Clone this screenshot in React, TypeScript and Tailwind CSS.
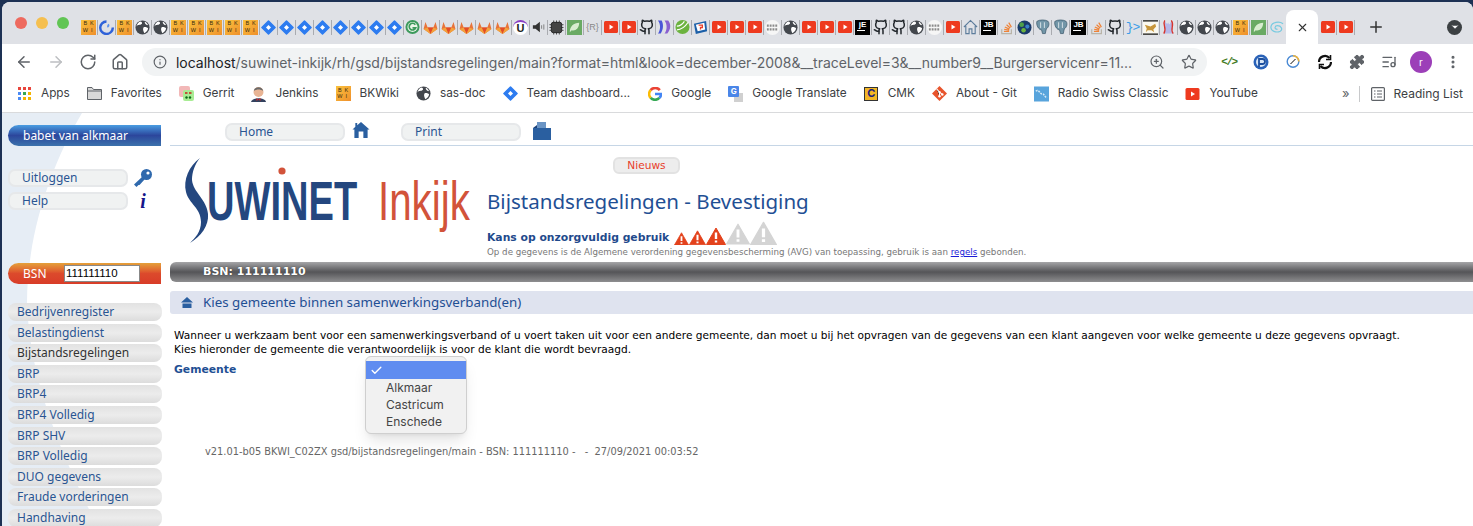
import { ArrowLeft, ArrowRight, RotateCw, Home, Info, ZoomIn, Star, Puzzle, ListMusic, MoreVertical, Plus, X, ChevronDown, Check } from "lucide-react";

const Bk = ({ size = 15 }: { size?: number }) => (
  <span
    className="grid grid-cols-2 place-items-center bg-gradient-to-br from-[#f9c23c] to-[#ef8f2c] text-[#3a2a10] font-normal leading-none text-[5.5px] font-['Liberation_Sans',sans-serif] shrink-0 px-[1px] py-[1px]"
    style={{ width: size, height: size }}
  >
    <span>B</span>
    <span>K</span>
    <span>W</span>
    <span>I</span>
  </span>
);

const Globe = () => (
  <svg width="15" height="15" viewBox="0 0 16 16">
    <circle cx="8" cy="8" r="7.5" fill="#43474d" />
    <path d="M6 1.5 C9 3 7 5 5 5 C3 5 2 6 1.5 7 C2 4 4 2 6 1.5 Z M9 8 C11 7 13 8 14 9 C13.5 11 12 13 10 14 C9 12 8 10 9 8 Z M10.5 1.8 C12 2.5 13.5 4 14 5.5 L12 5 C11 4 10 3 10.5 1.8 Z" fill="#fff" />
  </svg>
);

const Jira = () => (
  <svg width="15" height="15" viewBox="0 0 16 16">
    <path d="M8 1 L15 8 L8 15 L1 8 Z" fill="#2d7cf0" stroke="#2d7cf0" strokeWidth="1.6" strokeLinejoin="round" />
    <path d="M8 5.3 L10.7 8 L8 10.7 L5.3 8 Z" fill="#fff" />
  </svg>
);

const Gitlab = () => (
  <svg width="15" height="15" viewBox="0 0 16 16">
    <path d="M8 15 L0.6 9.5 L2.6 2 L5 8 H11 L13.4 2 L15.4 9.5 Z" fill="#e8743a" />
    <path d="M8 15 L5 8 H11 Z" fill="#e24c28" />
    <path d="M.6 9.5 L5 8 L8 15 Z M15.4 9.5 L11 8 L8 15 Z" fill="#f3a23c" />
  </svg>
);

const Yt = ({ w = 14 }: { w?: number }) => (
  <svg width={w} height="12" viewBox="0 0 14 12">
    <rect width="14" height="12" rx="1.5" fill="#ee3a1f" />
    <path d="M5.5 3.5 L9.5 6 L5.5 8.5 Z" fill="#fff" />
  </svg>
);

const Github = () => (
  <svg width="16" height="16" viewBox="0 0 24 24" fill="none" stroke="#24292e" strokeWidth="2.3" strokeLinecap="round" strokeLinejoin="round">
    <path d="M15 22v-4a4.8 4.8 0 0 0-1-3.5c3 0 6-2 6-5.5.08-1.25-.27-2.48-1-3.5.28-1.15.28-2.35 0-3.5 0 0-1 0-3 1.5-2.64-.5-5.36-.5-8 0C6 2 5 2 5 2c-.3 1.15-.3 2.35 0 3.5A5.4 5.4 0 0 0 4 9c0 3.5 3 5.5 6 5.5-.39.49-.68 1.05-.85 1.65S8.93 17.38 9 18v4" />
    <path d="M9 18c-4.51 2-5-2-7-2" />
  </svg>
);

const Leaf = () => (
  <svg width="15" height="15" viewBox="0 0 16 16">
    <rect width="16" height="16" fill="#6aaa64" />
    <path d="M3 13 C3 7 7 3 13 3 C13 9 9 12 5 11 Z" fill="#d8ecd0" />
  </svg>
);

const Dots = () => (
  <svg width="15" height="15" viewBox="0 0 16 16">
    <circle cx="8" cy="8" r="8" fill="#f6f6f6" />
    <path d="M2 6 H14 M2 10 H14" stroke="#8a8a8a" strokeWidth="2.4" strokeDasharray="2 1" />
  </svg>
);

const So = () => (
  <svg width="14" height="15" viewBox="0 0 16 16" fill="none">
    <path d="M2 10 V15 H13 V10" stroke="#b9b4a8" strokeWidth="1.4" />
    <path d="M4.5 12.5 H10.5 M4.7 10 L10.5 11 M5.5 7.5 L10.8 9.8 M7.5 4.8 L11.7 8.5 M10 2.5 L13 7.5" stroke="#ef8236" strokeWidth="1.4" />
  </svg>
);

const Jb = ({ label = "JB" }: { label?: string }) => (
  <span className="flex flex-col items-center justify-start w-[15px] h-[15px] bg-black text-white text-[8px] leading-[10px] font-bold font-['Liberation_Sans',sans-serif]">
    {label}
    <span className="block w-[8px] h-[1px] bg-white self-start ml-[2px]" />
  </span>
);

const Pg = () => (
  <svg width="15" height="16" viewBox="0 0 16 16">
    <path d="M2 2 C5 0 11 0 14 2 C16 5 14 9 12 10 L11 15 H8 L7 11 C4 11 1 6 2 2 Z" fill="#7296a8" stroke="#3e5b6e" strokeWidth=".8" />
    <path d="M6 3 V9 M10 3 V9" stroke="#dbe5ea" strokeWidth="1" />
  </svg>
);

// one favicon of the tab strip, by short code
const Fav = ({ t }: { t: string }) => {
  if (t === "bk") return <Bk />;
  if (t === "gl") return <Globe />;
  if (t === "ji") return <Jira />;
  if (t === "lab") return <Gitlab />;
  if (t === "yt") return <Yt />;
  if (t === "gh") return <Github />;
  if (t === "lf") return <Leaf />;
  if (t === "dt") return <Dots />;
  if (t === "so") return <So />;
  if (t === "jb") return <Jb />;
  if (t === "je") return <Jb label="jE" />;
  if (t === "pg") return <Pg />;
  if (t === "clock")
    return (
      <svg width="15" height="15" viewBox="0 0 16 16" fill="none">
        <path d="M8 1.5 A6.7 6.7 0 1 0 14.7 8" stroke="#2f62d8" strokeWidth="2.6" />
        <path d="M10 4 C12 5 11 8 9 8 C8 7 9 5 10 4 Z" fill="#5a90ee" />
      </svg>
    );
  if (t === "g")
    return (
      <svg width="15" height="16" viewBox="0 0 16 16">
        <circle cx="8" cy="8" r="7.5" fill="#3d9a5c" />
        <circle cx="8" cy="8" r="5.4" fill="#eaf5e8" />
        <path d="M11 5.5 A3.6 3.6 0 1 0 11.4 9 H8" stroke="#3d9a5c" strokeWidth="1.8" fill="none" />
      </svg>
    );
  if (t === "u")
    return (
      <span className="flex flex-col items-center justify-center w-[15px] h-[15px] rounded-full bg-white text-[11px] font-bold leading-[11px] text-[#222] font-['Liberation_Sans',sans-serif] border-t-2 border-[#8a3fc4]">
        U
      </span>
    );
  if (t === "sp")
    return (
      <svg width="14" height="14" viewBox="0 0 16 16">
        <path d="M1 6 H4 L9 2 V14 L4 10 H1 Z" fill="#333" />
        <path d="M11 6 V10 M13.5 5 V11" stroke="#777" strokeWidth="1" />
      </svg>
    );
  if (t === "chip")
    return (
      <svg width="15" height="15" viewBox="0 0 16 16" fill="none">
        <rect x="2.5" y="2.5" width="11" height="11" rx="2" fill="#444" stroke="#222" />
        <path d="M5 .5 V15.5 M8 .5 V15.5 M11 .5 V15.5 M.5 5 H15.5 M.5 8 H15.5 M.5 11 H15.5" stroke="#222" strokeWidth=".8" strokeDasharray="2 11" />
      </svg>
    );
  if (t === "r") return <span className="text-[9px] leading-none text-[#888] font-['Liberation_Sans',sans-serif]">{"{R}"}</span>;
  if (t === "pp")
    return (
      <svg width="15" height="16" viewBox="0 0 16 16" fill="none">
        <path d="M1 1 H5 C7 5 7 10 4 15 H1 C4 11 4 5 1 1 Z" fill="#4a55d8" />
        <path d="M8 1 H12 C15 5 15 10 11 15 H8 C11 11 11 5 8 1 Z" fill="#8a60d0" />
      </svg>
    );
  if (t === "spring")
    return (
      <svg width="15" height="16" viewBox="0 0 16 16">
        <circle cx="8" cy="8" r="7.5" fill="#6cb33f" />
        <path d="M2 11 C6 11 10 9 14 3 M2 7 C6 7 8 5 10 2" stroke="#fff" strokeWidth="1.2" fill="none" />
      </svg>
    );
  if (t === "tk")
    return (
      <svg width="15" height="15" viewBox="0 0 16 16">
        <path d="M1 4 L14 1 L15 12 L3 15 Z" fill="#1c5fa8" />
        <path d="M3 5 L12 3 L13 10 L5 12 Z" fill="#fff" />
        <path d="M6 5.5 H10 V8 H8 V10" stroke="#e8402a" strokeWidth="1.4" fill="none" />
      </svg>
    );
  if (t === "hm")
    return (
      <svg width="15" height="16" viewBox="0 0 16 16" fill="none" stroke="#5d7d9c" strokeWidth="1.2">
        <path d="M1 8 L8 1 L15 8 M3 7 V15 H6.5 V10 H9.5 V15 H13 V7" />
      </svg>
    );
  if (t === "ball")
    return (
      <svg width="15" height="15" viewBox="0 0 16 16">
        <circle cx="8" cy="8" r="7.5" fill="#1a3a6a" />
        <circle cx="5" cy="5" r="2.5" fill="#4fa04a" />
        <circle cx="11" cy="7" r="2.2" fill="#3a80c8" />
        <circle cx="7" cy="11" r="2.4" fill="#6cb33f" />
      </svg>
    );
  if (t === "br") return <span className="text-[13px] leading-none text-[#3b9ce8] font-['Liberation_Mono',monospace] tracking-[-1px]">{"}>"}</span>;
  if (t === "cat")
    return (
      <svg width="15" height="15" viewBox="0 0 16 16">
        <rect width="16" height="16" fill="#fbf9ef" />
        <path d="M0 1 H16 M0 15 H16" stroke="#111" strokeWidth="1.4" />
        <path d="M2 5 L8 7 L13 4 L14 7 L11 10 L12 13 L9 11 L5 11 L3 13 L4 9 Z" fill="#c8963a" />
      </svg>
    );
  if (t === "fl")
    return (
      <svg width="15" height="16" viewBox="0 0 16 16">
        <path d="M4 1 C1 6 7 9 3 15 H13 C9 10 15 6 11 1 C10 5 8 7 8 3 C7 6 5 4 4 1 Z" fill="#b6b8e8" />
        <path d="M4 1 C1 6 7 9 3 15 M11 1 C15 6 9 10 13 15" stroke="#d8342c" strokeWidth="1.4" fill="none" />
      </svg>
    );
  if (t === "sw")
    return (
      <svg width="15" height="13" viewBox="0 0 16 14" fill="none" stroke="#79cbe0" strokeWidth="1.3">
        <path d="M14 3 C10 0 2 1 1 6 C0 11 7 13 11 11 C14 9 12 5 8 5 C5 5 4 9 8 9" />
      </svg>
    );
  return null;
};

const tabs = [
  "bk", "clock", "bk", "gl", "gl", "bk", "bk", "bk", "bk", "bk",
  "ji", "ji", "ji", "ji", "ji", "ji", "ji", "ji", "g",
  "lab", "lab", "lab", "lab", "lab", "u", "sp", "chip", "lf", "r", "yt", "yt", "gh", "pp", "spring", "tk",
  "yt", "yt", "yt", "dt", "gl", "yt", "yt", "yt", "je", "gh", "gh", "gl", "dt", "yt", "hm", "jb",
  "so", "ball", "pg", "pg", "jb", "so", "gh", "br", "cat", "fl", "gl", "gl", "gl", "bk", "lf", "sw",
];

const Tab = ({ t, last }: { t: string; last?: boolean }) => (
  <div className={`flex items-center justify-center w-[18px] h-[15px] ${last ? "" : "border-r border-[#a9abb0]"}`}>
    <Fav t={t} />
  </div>
);

const Bookmark = ({ icon, label }: { icon: React.ReactNode; label: string }) => (
  <div className="flex items-center gap-[9px] mr-[17px]">
    <span className="flex items-center justify-center w-[15px] h-[16px]">{icon}</span>
    <span className="whitespace-nowrap">{label}</span>
  </div>
);

const AppsIcon = () => (
  <span className="grid grid-cols-3 gap-[2px] w-[13px]">
    {["bg-[#e8453c]", "bg-[#e8453c]", "bg-[#e8453c]", "bg-[#4a8af4]", "bg-[#34a853]", "bg-[#f4b400]", "bg-[#4a8af4]", "bg-[#f4b400]", "bg-[#f4b400]"].map((c, i) => (
      <span key={i} className={`w-[3px] h-[3px] ${c}`} />
    ))}
  </span>
);

const Gbtn = ({ children }: { children: React.ReactNode }) => (
  <div className="flex items-center w-[120px] h-[18px] pl-[12px] rounded-[7px] bg-[#f0f2f2] border-2 border-[#e6e8ea] text-[#2a5592]">
    {children}
  </div>
);

const menu = [
  "Bedrijvenregister", "Belastingdienst", "Bijstandsregelingen", "BRP", "BRP4", "BRP4 Volledig",
  "BRP SHV", "BRP Volledig", "DUO gegevens", "Fraude vorderingen", "Handhaving",
];

const Warn = ({ w, on }: { w: number; on?: boolean }) => (
  <svg width={w} height={w * 0.9} viewBox="0 0 20 18">
    <path d="M10 1 L19.5 17.5 H.5 Z" fill={on ? "#e3421c" : "#d4d4d4"} stroke={on ? "#e3421c" : "#d4d4d4"} strokeLinejoin="round" />
    <path d="M10 5.5 V12 M10 13.6 V15.6" stroke="#fff" strokeWidth="2.4" />
  </svg>
);

export default function App() {
  return (
    <div className="h-[526px] w-[1473px] overflow-hidden bg-[#1d3154] pt-[2px]">
      <div className="ml-[2px] h-full flex flex-col bg-white rounded-t-[8px] overflow-hidden font-['Inter',sans-serif]">
        {/* tab strip */}
        <div className="flex items-end h-[42px] bg-[#dfe1e6] shrink-0">
          <div className="flex items-center gap-[9px] h-full pl-[13px] w-[78px]">
            <span className="w-[12px] h-[12px] rounded-full bg-[#ee6a5f]" />
            <span className="w-[12px] h-[12px] rounded-full bg-[#f5bf4f]" />
            <span className="w-[12px] h-[12px] rounded-full bg-[#61c554]" />
          </div>
          <div className="flex items-center h-full pt-[8px]">
            {tabs.map((t, i) => (
              <Tab key={i} t={t} last={i === tabs.length - 1} />
            ))}
          </div>
          <div className="flex items-center justify-center w-[32px] h-[34px] bg-white rounded-t-[8px]">
            <X size={13} color="#333" strokeWidth={2} />
          </div>
          <div className="flex items-center h-full pt-[8px] pl-[1px]">
            <Tab t="yt" />
            <Tab t="yt" />
          </div>
          <div className="flex items-center h-full pt-[8px] pl-[12px]">
            <Plus size={18} color="#333" strokeWidth={2} />
          </div>
          <div className="flex items-center h-full pt-[8px] ml-auto mr-[11px]">
            <span className="flex items-center justify-center w-[15px] h-[15px] rounded-full bg-[#3c4043]">
              <ChevronDown size={10} color="#fff" fill="#fff" />
            </span>
          </div>
        </div>

        {/* toolbar */}
        <div className="flex items-center h-[36px] shrink-0 text-[#5f6368]">
          <div className="flex items-center gap-[14px] pl-[13px] w-[140px]">
            <ArrowLeft size={18} strokeWidth={2} />
            <ArrowRight size={18} strokeWidth={2} color="#bdbfc2" />
            <RotateCw size={18} strokeWidth={2} />
            <Home size={18} strokeWidth={2} />
          </div>
          <div className="flex items-center h-[28px] w-[1065px] rounded-full bg-[#f1f3f4] pl-[11px] pr-[10px] text-[14px]">
            <Info size={14} strokeWidth={2} />
            <span className="ml-[9px] whitespace-nowrap text-[#5f6368] tracking-[-0.03px]">
              <span className="text-[#202124]">localhost</span>/suwinet-inkijk/rh/gsd/bijstandsregelingen/main?format=html&amp;look=december-2008&amp;__traceLevel=3&amp;__number9__Burgerservicenr=11...
            </span>
            <span className="ml-auto flex items-center gap-[16px]">
              <ZoomIn size={16} strokeWidth={1.8} />
              <Star size={16} strokeWidth={1.8} />
            </span>
          </div>
          <div className="flex items-center gap-[16px] pl-[14px]">
            <span className="flex justify-center w-[16px] text-[11px] font-bold text-[#3f7a1d] font-['Liberation_Mono',monospace] tracking-[-1.5px]">{"</>"}</span>
            <svg width="16" height="16" viewBox="0 0 16 16">
              <circle cx="8" cy="8" r="7.5" fill="#2a62b8" />
              <circle cx="8" cy="8" r="5" fill="#d8e6f6" />
              <path d="M6 13 V5 H9.5 A2.5 2.5 0 0 1 9.5 10 H6" stroke="#1d4f9e" strokeWidth="1.8" fill="none" />
            </svg>
            <svg width="16" height="16" viewBox="0 0 16 16" fill="none">
              <circle cx="8" cy="7.5" r="5.8" stroke="#4a8ad4" strokeWidth="1.4" />
              <path d="M8 1.7 A5.8 5.8 0 0 1 13.8 7.5" stroke="#f0b43c" strokeWidth="1.6" />
              <path d="M5.5 10 L9 6.5 L10.5 5 L7 8.5 Z" stroke="#555" strokeWidth="1" />
            </svg>
            <svg width="16" height="16" viewBox="0 0 16 16" fill="none" stroke="#111" strokeWidth="2.2">
              <path d="M2 8 A6 6 0 0 1 12.5 4 M14 8 A6 6 0 0 1 3.5 12" />
              <path d="M13.5 1 V5.5 H9 M2.5 15 V10.5 H7" strokeWidth="1.6" />
            </svg>
            <Puzzle size={16} fill="#5f6368" strokeWidth={1.5} />
            <ListMusic size={16} strokeWidth={2} />
            <span className="flex items-center justify-center w-[22px] h-[22px] -mx-[3px] rounded-full bg-[#9c3fb8] text-white text-[10px]">r</span>
            <MoreVertical size={16} strokeWidth={2.6} />
          </div>
        </div>

        {/* bookmarks */}
        <div className="flex items-center h-[33px] pb-[5px] shrink-0 border-b border-[#d9dadc] pl-[15px] text-[11.8px] text-[#3c4043]">
          <Bookmark icon={<AppsIcon />} label="Apps" />
          <Bookmark
            icon={
              <svg width="15" height="13" viewBox="0 0 15 13" fill="#d8d8d8" stroke="#5f6368">
                <path d="M.5 12.5 V.5 H5 L6.5 2.5 H14.5 V12.5 Z" />
                <path d="M.5 4 H14.5" />
              </svg>
            }
            label="Favorites"
          />
          <Bookmark
            icon={
              <svg width="15" height="15" viewBox="0 0 15 15">
                <rect width="11" height="11" rx="2" fill="#f2b8b8" />
                <rect x="4" y="4" width="11" height="11" rx="2" fill="#a8ec94" />
                <path d="M6 7 H8.5 M10 7 H12.5" stroke="#c8201c" strokeWidth="1.5" />
                <circle cx="7.5" cy="11.5" r="1.2" fill="#0a6a16" />
                <circle cx="11" cy="11.5" r="1.2" fill="#0a6a16" />
              </svg>
            }
            label="Gerrit"
          />
          <Bookmark
            icon={
              <svg width="15" height="16" viewBox="0 0 15 16">
                <path d="M0 16 C1 11 14 11 15 16 Z" fill="#33415e" />
                <circle cx="7.5" cy="6" r="5" fill="#e8b494" />
                <path d="M3 5 C3 0 12 0 12 5 C10 3 5 3 3 5 Z" fill="#6a6a6a" />
                <path d="M5.5 12 L7.5 13.5 L9.5 12 V15 L7.5 13.5 L5.5 15 Z" fill="#c8282a" />
              </svg>
            }
            label="Jenkins"
          />
          <Bookmark icon={<Bk />} label="BKWiki" />
          <Bookmark icon={<Globe />} label="sas-doc" />
          <Bookmark icon={<Jira />} label="Team dashboard..." />
          <Bookmark
            icon={
              <svg width="14" height="14" viewBox="0 0 16 16" fill="none" strokeWidth="3">
                <path d="M13.5 3.5 A7 7 0 0 0 3 3.5" stroke="#ea4335" />
                <path d="M3 3.5 A7 7 0 0 0 3 12.5" stroke="#fbbc05" />
                <path d="M3 12.5 A7 7 0 0 0 13 12.5" stroke="#34a853" />
                <path d="M13 12.5 A7 7 0 0 0 15 8 H8" stroke="#4285f4" />
              </svg>
            }
            label="Google"
          />
          <Bookmark
            icon={
              <span className="relative w-[15px] h-[16px]">
                <span className="absolute right-0 bottom-0 w-[9px] h-[9px] bg-[#d0d0d0]" />
                <span className="absolute left-0 top-0 flex items-center justify-center w-[11px] h-[11px] bg-[#4a86e8] text-white text-[8px] font-bold leading-none rounded-[1px]">G</span>
              </span>
            }
            label="Google Translate"
          />
          <Bookmark
            icon={<span className="flex items-center justify-center w-[14px] h-[14px] bg-[#f2b624] text-[#1c1c7a] text-[11px] font-bold leading-none border border-[#333]">C</span>}
            label="CMK"
          />
          <Bookmark
            icon={
              <svg width="15" height="15" viewBox="0 0 16 16">
                <path d="M8 0 L16 8 L8 16 L0 8 Z" fill="#e8542c" />
                <path d="M5 3 L8 6.5 V11 M8 6.5 L11 9" stroke="#fff" strokeWidth="1.2" />
                <circle cx="8" cy="11" r="1.3" fill="#fff" />
                <circle cx="8" cy="6.5" r="1.3" fill="#fff" />
                <circle cx="11" cy="9" r="1.3" fill="#fff" />
              </svg>
            }
            label="About - Git"
          />
          <Bookmark
            icon={
              <svg width="16" height="16" viewBox="0 0 16 16" fill="none">
                <rect width="16" height="16" fill="#58a4dc" />
                <path d="M2 5 C5 2 6 8 9 8 C11 8 11 11 14 12" stroke="#d4e8f6" strokeWidth="1.6" strokeDasharray="2 1" />
              </svg>
            }
            label="Radio Swiss Classic"
          />
          <Bookmark icon={<Yt w={15} />} label="YouTube" />
          <div className="ml-auto flex items-center text-[#5f6368] pr-[10px]">
            <span className="text-[13px] leading-none">»</span>
            <span className="w-px h-[16px] bg-[#c8c9cb] ml-[9px] mr-[11px]" />
            <svg width="14" height="14" viewBox="0 0 14 14" fill="none" stroke="#5f6368" strokeWidth="1.2">
              <rect x=".6" y=".6" width="12.8" height="12.8" rx="1" />
              <path d="M3 4 H4.5 M6 4 H11 M3 7 H4.5 M6 7 H11 M3 10 H4.5 M6 10 H11" />
            </svg>
            <span className="ml-[9px] text-[12px] text-[#3c4043] whitespace-nowrap">Reading List</span>
          </div>
        </div>

        {/* page */}
        <div className="flex flex-1 min-h-0 font-['DejaVu_Sans',sans-serif] text-[10.6px]">
          {/* sidebar */}
          <aside className="relative w-[168px] shrink-0 pl-[6px] font-['Noto_Sans',sans-serif] text-[12px]">
            <svg className="absolute left-0 top-0" width="168" height="413" viewBox="0 0 168 413">
              <path d="M0 0 H80 C50 50 25 120 25 190 C28 280 70 360 95 413 H0 Z" fill="#e6edf5" />
            </svg>
            <div className="relative flex flex-col">
              <div className="flex items-center w-[153px] h-[21px] mt-[12px] rounded-l-full bg-gradient-to-b from-[#4a9de2] via-[#2c469c] to-[#3c72ac] pl-[15px] text-white">
                babet van alkmaar
              </div>
              <div className="flex items-center gap-[5px] h-[18px] mt-[23px]">
                <Gbtn>Uitloggen</Gbtn>
                <svg width="20" height="20" viewBox="0 0 20 20">
                  <circle cx="13.5" cy="6.5" r="5.5" fill="#2f69ad" />
                  <circle cx="15" cy="5" r="1.6" fill="#fff" />
                  <path d="M9.5 8.5 L1 16.5 L3.5 19 L5.5 17 L6.5 17 L11.5 11.5 Z" fill="#2f69ad" />
                </svg>
              </div>
              <div className="flex items-center gap-[5px] h-[18px] mt-[5px]">
                <Gbtn>Help</Gbtn>
                <span className="w-[20px] text-center text-[20px] leading-none font-bold italic text-[#16168a] font-['Liberation_Serif',serif]">i</span>
              </div>
              <div className="flex items-center w-[153px] h-[21px] mt-[53px] rounded-l-full bg-gradient-to-b from-[#e4a03a] via-[#dc4a2c] to-[#d83c28] pl-[15px] text-white">
                <span className="w-[41px]">BSN</span>
                <span className="flex items-center w-[76px] h-[17px] bg-white border border-[#888] text-black text-[11.5px] pl-[1px] font-['Liberation_Sans',sans-serif]">111111110</span>
              </div>
              <div className="flex flex-col gap-[2.6px] mt-[19px] pr-[8px]">
                {menu.map((m) => (
                  <div
                    key={m}
                    className={`flex items-center h-[18px] rounded-[8px] bg-gradient-to-b from-[#e2e2e2] via-[#ececec] to-[#dcdcdc] pl-[9px] ${m === "Bijstandsregelingen" ? "text-[#333]" : "text-[#2a5592]"}`}
                  >
                    {m}
                  </div>
                ))}
              </div>
            </div>
          </aside>

          {/* main */}
          <main className="flex-1 min-w-0">
            <div className="flex items-start h-[33px] border-b border-[#c6d6e6] pl-[55px] pt-[10px] font-['Noto_Sans',sans-serif] text-[12px]">
              <Gbtn>Home</Gbtn>
              <svg className="ml-[7px] -mt-[1px]" width="18" height="17" viewBox="0 0 18 18">
                <path d="M9 0 L18 8 H16 V17 H11.5 V10 H6.5 V17 H2 V8 H0 L3 5 V1 H5 V3.4 Z" fill="#2a5fa0" />
              </svg>
              <span className="ml-[31px]">
                <Gbtn>Print</Gbtn>
              </span>
              <svg className="ml-[12px] -mt-[1px]" width="18" height="18" viewBox="0 0 18 18">
                <path d="M4 0 H13 V6 H4 Z" fill="#6a94c4" />
                <path d="M0 6 H18 V18 H0 Z" fill="#2a5fa0" />
                <path d="M0 6 L4 3 V6 Z" fill="#183f78" />
              </svg>
            </div>

            {/* header */}
            <div className="flex h-[116px]">
              {/* logo */}
              <svg className="ml-[13px] mt-[10px] shrink-0" width="304" height="90" viewBox="0 0 304 90">
                <path d="M17 2 C6 10 0 24 3 36 C6 48 18 52 18 66 C18 76 12 82 7 87 C18 80 26 70 25 58 C24 44 10 36 9 24 C9 16 12 8 17 2 Z" fill="#24477f" />
                <text transform="translate(24 64) scale(.68 1)" fontFamily="Liberation Sans" fontWeight="700" fontSize="56" fill="#24477f">UWINET</text>
                <circle cx="99" cy="15" r="3.6" fill="#d2533a" />
                <text transform="translate(195 64) scale(.72 1)" fontFamily="Liberation Sans" fontSize="56" fill="#d2533a">Inkijk</text>
              </svg>
              <div className="flex flex-col">
                <div className="ml-[126px] mt-[11px] flex items-center justify-center w-[67px] h-[17px] rounded-[6px] bg-[#ededed] border-2 border-[#e2e2e2] text-[#e8402a]">Nieuws</div>
                <h1 className="mt-[14px] font-['Noto_Sans',sans-serif] text-[20.55px] leading-[26px] text-[#1f4f94] whitespace-nowrap">Bijstandsregelingen - Bevestiging</h1>
                <div className="flex items-end mt-[2px] h-[30px]">
                  <span className="font-bold text-[#1f4a8c] text-[10.8px] leading-[17px]">Kans op onzorgvuldig gebruik</span>
                  <span className="flex items-end ml-[5px] pb-[1px]">
                    <Warn w={15} on />
                    <Warn w={17} on />
                    <Warn w={20} on />
                    <Warn w={24} />
                    <Warn w={27} />
                  </span>
                </div>
                <p className="text-[8.7px] leading-[12px] text-[#777] whitespace-nowrap">
                  Op de gegevens is de Algemene verordening gegevensbescherming (AVG) van toepassing, gebruik is aan{" "}
                  <span className="underline text-[#1a1ad8]">regels</span> gebonden.
                </p>
              </div>
            </div>

            <div className="flex items-center h-[20px] rounded-l-[6px] bg-gradient-to-b from-[#a6a6a8] via-[#555558] to-[#8e8e90] pl-[33px] font-bold text-[11px] text-white [text-shadow:0_0_1px_#222]">
              BSN: 111111110
            </div>

            <div className="flex items-center h-[23px] mt-[9px] rounded-l-[3px] bg-[#dfe3ef] pl-[11px] font-['Noto_Sans',sans-serif] text-[13.33px] text-[#1f4f94]">
              <svg width="12" height="11" viewBox="0 0 12 11">
                <path d="M6 0 L12 5.5 H0 Z M1.5 6.5 H10.5 V11 H1.5 Z" fill="#2a5fa0" />
              </svg>
              <span className="ml-[10px]">Kies gemeente binnen samenwerkingsverband(en)</span>
            </div>

            <div className="pl-[4px] pt-[14px] text-black leading-[14px]">
              <p className="whitespace-nowrap">Wanneer u werkzaam bent voor een samenwerkingsverband of u voert taken uit voor een andere gemeente, dan moet u bij het opvragen van de gegevens van een klant aangeven voor welke gemeente u deze gegevens opvraagt.</p>
              <p>Kies hieronder de gemeente die verantwoordelijk is voor de klant die wordt bevraagd.</p>
              <div className="relative mt-[6px] h-[14px]">
                <span className="font-bold text-[10.8px] text-[#1f4f94]">Gemeente</span>
                {/* open select menu */}
                <div className="absolute left-[191px] top-[-6px] w-[102px] h-[78px] pt-[4px] rounded-[6px] bg-[#f1f1f1] border border-[#cfcfcf] shadow-lg text-[12px] text-[#444] font-['Inter',sans-serif]">
                  <div className="flex items-center h-[18px] bg-[#5f8cf0] pl-[4px]">
                    <Check size={13} color="#fff" strokeWidth={2.5} />
                  </div>
                  <div className="pl-[20px] h-[17px] leading-[17px]">Alkmaar</div>
                  <div className="pl-[20px] h-[17px] leading-[17px]">Castricum</div>
                  <div className="pl-[20px] h-[17px] leading-[17px]">Enschede</div>
                </div>
              </div>
            </div>

            <p className="pl-[35px] mt-[70px] text-[9.84px] leading-[12px] text-[#666] whitespace-pre">v21.01-b05 BKWI_C02ZX gsd/bijstandsregelingen/main - BSN: 111111110 -   -  27/09/2021 00:03:52</p>
          </main>
        </div>
      </div>
    </div>
  );
}
